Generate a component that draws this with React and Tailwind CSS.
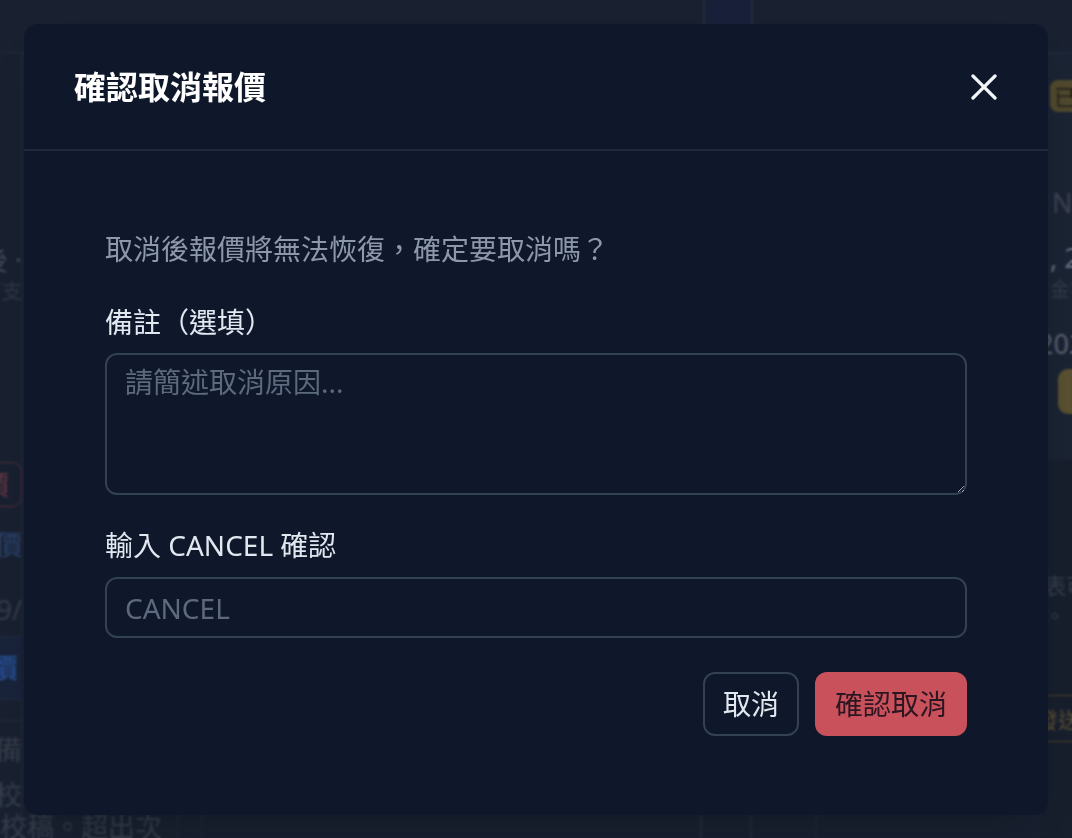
import React, { useState } from "react";
import { X } from "lucide-react";

const FONT = { fontFamily: '"Noto Sans", "Noto Sans CJK TC", sans-serif' };

function Background() {
    return (
        <div className="flex h-screen flex-col overflow-hidden bg-[#1c2537] text-[#5b6576]">
            {/* Top bar */}
            <div className="flex h-[53px] shrink-0 border-b border-[#263247]">
                <div className="w-[703px] shrink-0" />
                <div className="w-[50px] shrink-0 border-x-2 border-[#283143] bg-[#1b2440]" />
                <div className="flex-1" />
            </div>

            <div className="flex flex-1">
                {/* Left column, mostly off-screen */}
                <div className="w-[22px] shrink-0 overflow-visible border-r border-[#263247]">
                    <div className="ml-[-198px] flex w-[220px] flex-col items-end text-right text-[27px] leading-[32px]">
                        <p className="mt-[191px] whitespace-nowrap text-[#485263]">送出後 ·</p>
                        <p className="whitespace-nowrap text-[20px] text-[#363f4f]">可支</p>
                        <div className="mt-[154px] flex h-[45px] items-center rounded-[10px] border border-[#5e3142] px-3 text-[#6e3c4c]">
                            取消報價
                        </div>
                        <p className="mt-[22px] text-[#314c7c]">修改報價</p>
                        <p className="mt-[33px] text-[#3a4353]">2025/9/</p>
                        <div className="mt-[10px] flex h-[64px] w-full items-center justify-end border-y border-[#24304a] bg-[#1c2842] pr-1 font-bold text-[#2b5298]">
                            報價
                        </div>
                        <div className="mt-[20px] h-px w-full bg-[#283347]" />
                        <p className="mt-[13px] text-[#3b4454]">客戶的備</p>
                        <p className="mt-[13px] text-[#3b4454]">最多校</p>
                    </div>
                    <p className="whitespace-nowrap text-[27px] leading-[32px] text-[#3b4454]">校稿。超出次</p>
                </div>

                {/* Main table area */}
                <div className="flex w-[1018px] shrink-0">
                    <div className="w-[156px] border-r border-[#263247]" />
                    <div className="w-[24px] border-r border-[#263247]" />
                    <div className="w-[500px] border-r-2 border-[#283143]" />
                    <div className="w-[50px] border-r-2 border-[#283143]" />
                    <div className="w-[65px] border-r border-[#263247]" />
                </div>

                {/* Right sidebar */}
                <div className="flex w-[260px] shrink-0 flex-col">
                    <div className="flex h-[407px] flex-col bg-[#1e283a] pl-[10px] text-[27px] leading-[36px]">
                        <div className="mt-[27px] flex h-[32px] w-[80px] items-center rounded-lg bg-[#5a5233] px-1 text-[22px] text-[#26261f]">
                            已接受
                        </div>
                        <p className="mt-[73px] pl-[2px] text-[#414b5c]">NT$</p>
                        <p className="mt-[19px] whitespace-nowrap text-[#717b8d]">, 2025</p>
                        <p className="whitespace-nowrap text-[20px] leading-[28px] text-[#384252]">金額</p>
                        <p className="mt-[22px] ml-[-12px] whitespace-nowrap text-[#646d7f]">2025</p>
                        <div className="mt-[7px] ml-[8px] h-[45px] w-[100px] rounded-[10px] bg-[#635a36]" />
                    </div>
                    <div className="flex flex-1 flex-col bg-[#1a2333] pl-[4px] text-[22px] leading-[30px] text-[#3b4454]">
                        <p className="mt-[110px] whitespace-nowrap">表可</p>
                        <p className="whitespace-nowrap">。</p>
                        <div className="mt-[65px] ml-[-8px] flex h-[47px] w-[80px] items-center border-y border-[#56492c] text-[#62563a]">
                            發送
                        </div>
                    </div>
                </div>
            </div>
        </div>
    );
}

export default function App() {
    const [note, setNote] = useState("");
    const [confirmText, setConfirmText] = useState("");

    return (
        <div lang="zh-Hant-TW" className="relative" style={FONT}>
            <Background />

            {/* Overlay */}
            <div className="fixed inset-0 flex items-start justify-center bg-black/10 p-6 backdrop-blur-[1px]">
                <div className="w-full rounded-[14px] bg-[#0f172a] shadow-2xl">
                    {/* Header */}
                    <div className="flex h-[127px] items-center justify-between border-b-2 border-[#1e293b] pr-[42px] pl-[50px]">
                        <h2 className="text-[32px] font-bold text-white">確認取消報價</h2>
                        <button className="text-slate-100">
                            <X className="h-[44px] w-[44px]" strokeWidth={1.8} />
                        </button>
                    </div>

                    {/* Body */}
                    <div className="flex flex-col px-[81px] pt-[78px] pb-[79px] text-[28px] leading-[40px]">
                        <p className="text-[#8d99ab]">取消後報價將無法恢復，確定要取消嗎？</p>

                        <label className="mt-[33px] text-[#e2e8f0]">備註（選填）</label>
                        <textarea
                            value={note}
                            onChange={(e) => setNote(e.target.value)}
                            placeholder="請簡述取消原因..."
                            className="mt-[11px] h-[142px] w-full resize-y rounded-[12px] border-2 border-[#334155] bg-transparent px-[18px] py-[7px] text-[28px] leading-[40px] text-slate-200 placeholder-[#5d6a7e] focus:outline-none"
                        />

                        <label className="mt-[30px] text-[#e2e8f0]">輸入 CANCEL 確認</label>
                        <input
                            value={confirmText}
                            onChange={(e) => setConfirmText(e.target.value)}
                            placeholder="CANCEL"
                            className="mt-[12px] h-[61px] w-full rounded-[12px] border-2 border-[#334155] bg-transparent px-[18px] text-[28px] text-slate-200 placeholder-[#5d6a7e] focus:outline-none"
                        />

                        <div className="mt-[34px] flex justify-end gap-4">
                            <button className="h-[64px] rounded-[12px] border-2 border-[#334155] px-[18px] text-[28px] text-[#e2e8f0]">
                                取消
                            </button>
                            <button className="h-[64px] rounded-[12px] bg-[#c9515b] px-[20px] text-[28px] text-[#2b1622]">
                                確認取消
                            </button>
                        </div>
                    </div>
                </div>
            </div>
        </div>
    );
}
